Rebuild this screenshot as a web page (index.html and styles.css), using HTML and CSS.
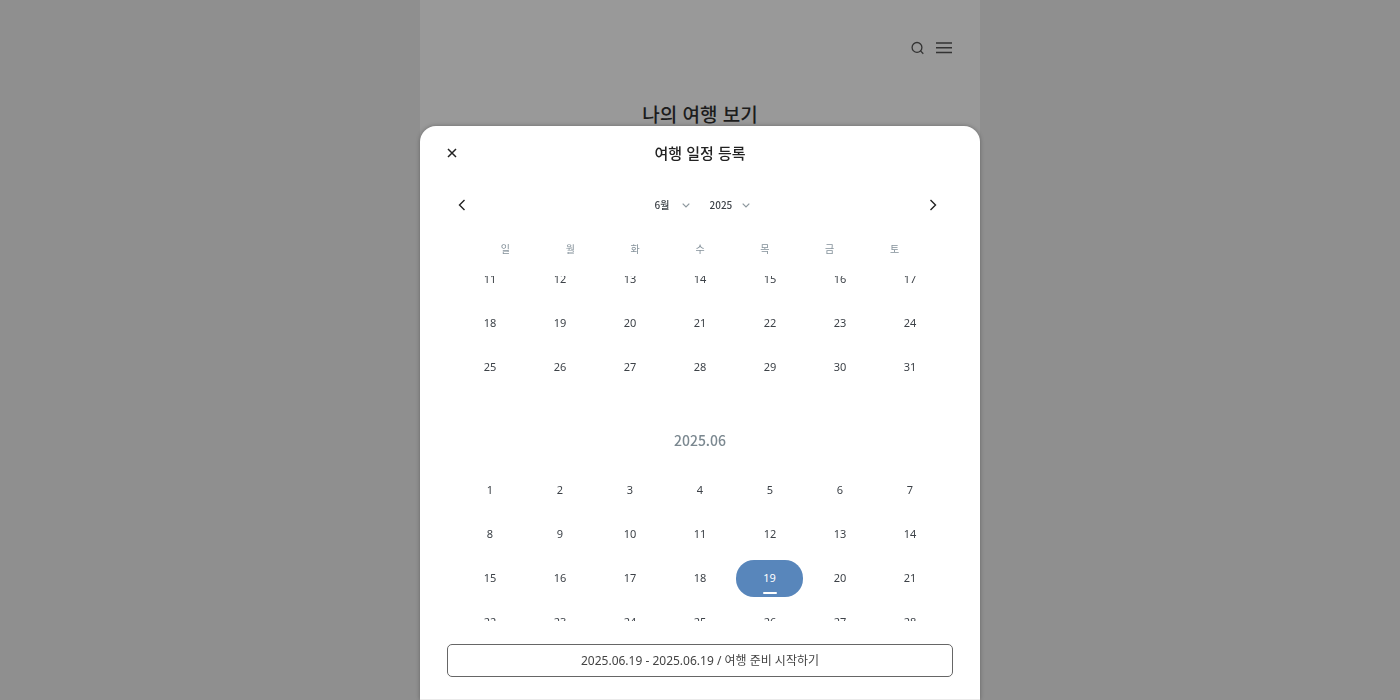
FILE: index.html
```html
<!DOCTYPE html>
<html lang="ko">
<head>
<meta charset="utf-8">
<meta name="viewport" content="width=device-width, initial-scale=1">
<title>여행 일정 등록</title>
<link rel="stylesheet" href="styles.css">
</head>
<body>
<div class="page">
  <header class="page-header">
    <button class="icon-button" type="button" aria-label="검색">
      <svg width="14" height="14" viewBox="0 0 14 14" fill="none" stroke="currentColor" stroke-width="1.3"><circle cx="6" cy="6.400" r="4.900"/><path d="M9.500 9.900l2.800 2.900"/></svg>
    </button>
    <button class="icon-button" type="button" aria-label="메뉴">
      <svg width="16" height="12" viewBox="0 0 16 12" fill="none" stroke="currentColor" stroke-width="1.4"><path d="M0 1h16M0 5.700h16M0 10.500h16"/></svg>
    </button>
  </header>
  <h1 class="page-title">나의 여행 보기</h1>
</div>

<section class="sheet" role="dialog" aria-labelledby="sheet-title">
  <header class="sheet-header">
    <button class="icon-button" type="button" aria-label="닫기">
      <svg width="10" height="10" viewBox="0 0 10 10" fill="none" stroke="currentColor" stroke-width="1.5"><path d="M1 1l8 8M9 1l-8 8"/></svg>
    </button>
    <h2 class="sheet-title" id="sheet-title">여행 일정 등록</h2>
  </header>

  <div class="month-nav">
    <button class="icon-button" type="button" aria-label="이전 달">
      <svg width="8" height="12" viewBox="0 0 8 12" fill="none" stroke="currentColor" stroke-width="1.4"><path d="M6.500 1L1.500 6l5 5"/></svg>
    </button>
    <div class="pickers">
      <span class="picker">
        <select class="picker-select" aria-label="월"><option>6월</option></select>
        <svg class="picker-arrow" width="8" height="5" viewBox="0 0 8 5" fill="none" stroke="currentColor" stroke-width="1.2"><path d="M.7.600L4 4 7.300.600"/></svg>
      </span>
      <span class="picker">
        <select class="picker-select" aria-label="연도"><option>2025</option></select>
        <svg class="picker-arrow" width="8" height="5" viewBox="0 0 8 5" fill="none" stroke="currentColor" stroke-width="1.2"><path d="M.7.600L4 4 7.300.600"/></svg>
      </span>
    </div>
    <button class="icon-button" type="button" aria-label="다음 달">
      <svg width="8" height="12" viewBox="0 0 8 12" fill="none" stroke="currentColor" stroke-width="1.4"><path d="M1.500 1l5 5-5 5"/></svg>
    </button>
  </div>

  <div class="weekdays">
    <span>일</span><span>월</span><span>화</span><span>수</span><span>목</span><span>금</span><span>토</span>
  </div>

  <div class="months">
    <div class="days days-scrolled">
      <button class="day">11</button><button class="day">12</button><button class="day">13</button><button class="day">14</button><button class="day">15</button><button class="day">16</button><button class="day">17</button>
      <button class="day">18</button><button class="day">19</button><button class="day">20</button><button class="day">21</button><button class="day">22</button><button class="day">23</button><button class="day">24</button>
      <button class="day">25</button><button class="day">26</button><button class="day">27</button><button class="day">28</button><button class="day">29</button><button class="day">30</button><button class="day">31</button>
    </div>
    <h3 class="month-title">2025.06</h3>
    <div class="days">
      <button class="day">1</button><button class="day">2</button><button class="day">3</button><button class="day">4</button><button class="day">5</button><button class="day">6</button><button class="day">7</button>
      <button class="day">8</button><button class="day">9</button><button class="day">10</button><button class="day">11</button><button class="day">12</button><button class="day">13</button><button class="day">14</button>
      <button class="day">15</button><button class="day">16</button><button class="day">17</button><button class="day">18</button><button class="day day-selected" aria-pressed="true">19</button><button class="day">20</button><button class="day">21</button>
      <button class="day">22</button><button class="day">23</button><button class="day">24</button><button class="day">25</button><button class="day">26</button><button class="day">27</button><button class="day">28</button>
    </div>
  </div>

  <footer class="sheet-footer">
    <button class="submit" type="button">2025.06.19 - 2025.06.19 / 여행 준비 시작하기</button>
  </footer>
</section>
</body>
</html>
```
FILE: styles.css
```css
* {
  box-sizing: border-box;
}

body {
  margin: 0;
  min-height: 100vh;
  background: #8f8f8f;
  color: #222;
  font-family: "Noto Sans", "Noto Sans CJK KR", sans-serif;
  font-size: 11px;
}

button,
select {
  margin: 0;
  padding: 0;
  border: 0;
  background: none;
  color: inherit;
  font: inherit;
  cursor: pointer;
}

h1,
h2,
h3 {
  margin: 0;
}

svg {
  display: block;
}

.page {
  max-width: 560px;
  min-height: 100vh;
  margin: 0 auto;
  background: #999;
}

.page-header {
  display: flex;
  justify-content: flex-end;
  align-items: center;
  gap: 11px;
  height: 96px;
  padding: 0 28px;
  color: #333;
}

.page-title {
  color: #1c1c1c;
  font-family: "Noto Sans CJK KR", sans-serif;
  font-size: 19px;
  font-weight: 500;
  line-height: 36px;
  text-align: center;
}

.icon-button {
  display: grid;
  place-items: center;
}

.sheet {
  position: fixed;
  inset: 126px 0 0;
  display: flex;
  flex-direction: column;
  max-width: 560px;
  margin: 0 auto;
  border-bottom: 1px solid #eaeaea;
  border-radius: 16px 16px 0 0;
  background: #fff;
  box-shadow: 0 0 4px rgba(0, 0, 0, 0.3);
}

.sheet-header {
  display: grid;
  grid-template-columns: 10px 1fr 10px;
  align-items: center;
  height: 54px;
  padding: 0 27px;
}

.sheet-title {
  font-family: "Noto Sans CJK KR", sans-serif;
  font-size: 15px;
  font-weight: 500;
  line-height: 24px;
  text-align: center;
}

.month-nav {
  display: grid;
  grid-template-columns: 8px 1fr 8px;
  align-items: center;
  height: 50px;
  padding: 0 43px 0 38px;
}

.pickers {
  display: flex;
  justify-content: center;
  gap: 20px;
  padding-left: 9px;
}

.picker {
  display: flex;
  align-items: center;
  gap: 9px;
}

.picker-select {
  min-width: 18px;
  appearance: none;
  color: #3d4248;
  font-family: "Noto Sans CJK KR", sans-serif;
  font-size: 10px;
  font-weight: 500;
  line-height: 16px;
}

.picker-arrow {
  color: #8d989e;
  pointer-events: none;
}

.weekdays {
  display: grid;
  grid-template-columns: repeat(7, 1fr);
  padding: 11px 53px 19px;
  color: #84919a;
  font-size: 10px;
  line-height: 16px;
  text-align: center;
}

.months {
  flex: 1;
  min-height: 0;
  padding: 0 35px;
  overflow: hidden;
}

.days {
  display: grid;
  grid-template-columns: repeat(7, 1fr);
  grid-auto-rows: 44px;
}

.days-scrolled {
  margin-top: -19px;
}

.day {
  color: #3d4248;
  line-height: 16px;
}

.day-selected {
  position: relative;
  margin: 4px 2px 3px 1px;
  padding-bottom: 1px;
  border-radius: 18px;
  background: #5886bb;
  color: #fff;
}

.day-selected::after {
  content: "";
  position: absolute;
  bottom: 3px;
  left: 50%;
  width: 14px;
  height: 2px;
  margin-left: -7px;
  border-radius: 1px;
  background: #fff;
}

.month-title {
  padding: 39px 0 16px;
  color: #7b8890;
  font-family: "Noto Sans CJK KR", sans-serif;
  font-size: 14px;
  font-weight: 500;
  line-height: 24px;
  text-align: center;
}

.sheet-footer {
  padding: 23px 27px 22px;
}

.submit {
  display: block;
  width: 100%;
  height: 33px;
  border: 1px solid #666;
  border-radius: 5px;
  color: #444;
  font-size: 12px;
  line-height: 20px;
}
```
